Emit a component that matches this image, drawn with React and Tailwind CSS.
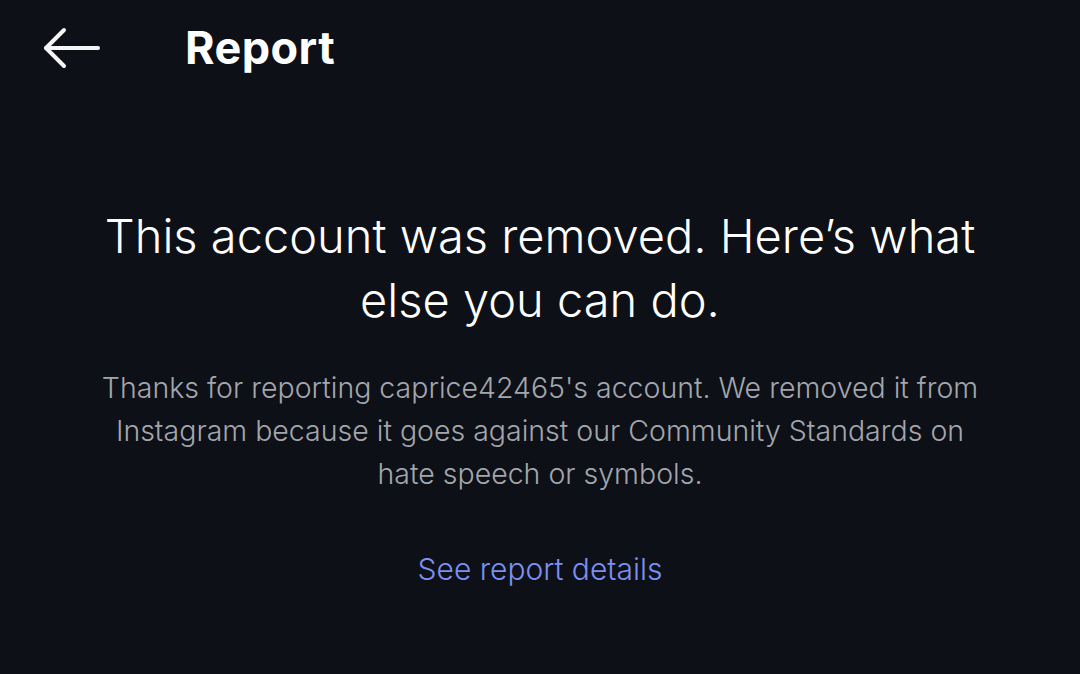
export default function App() {
  return (
    <div className="w-[1080px] h-[674px] bg-[#0d1016] text-white overflow-hidden" style={{ fontFamily: 'Inter, "Noto Sans", sans-serif' }}>
      <header className="flex items-center h-[96px] pl-[42px]">
        <svg width="58" height="44" viewBox="0 0 58 44" fill="none" stroke="#f5f5f5" strokeWidth="4" strokeLinecap="round" strokeLinejoin="round">
          <path d="M56 22H4" />
          <path d="M22 4L4 22l18 18" />
        </svg>
        <h1 className="ml-[85px] -mt-[2px] text-[45px] font-bold tracking-[0.01em] leading-none">Report</h1>
      </header>
      <main className="flex flex-col items-center pt-[108px] text-center">
        <h2 className="text-[47px] font-light leading-[64px] w-[960px]">
          This account was removed. Here’s what else you can do.
        </h2>
        <p className="mt-[34px] w-[900px] text-[28.5px] font-light leading-[43px] text-[#a3a6ad]">
          Thanks for reporting caprice42465's account. We removed it from Instagram because it goes against our Community Standards on hate speech or symbols.
        </p>
        <a className="mt-[59px] text-[30px] font-light text-[#7d8ff2] leading-none">See report details</a>
      </main>
    </div>
  );
}
